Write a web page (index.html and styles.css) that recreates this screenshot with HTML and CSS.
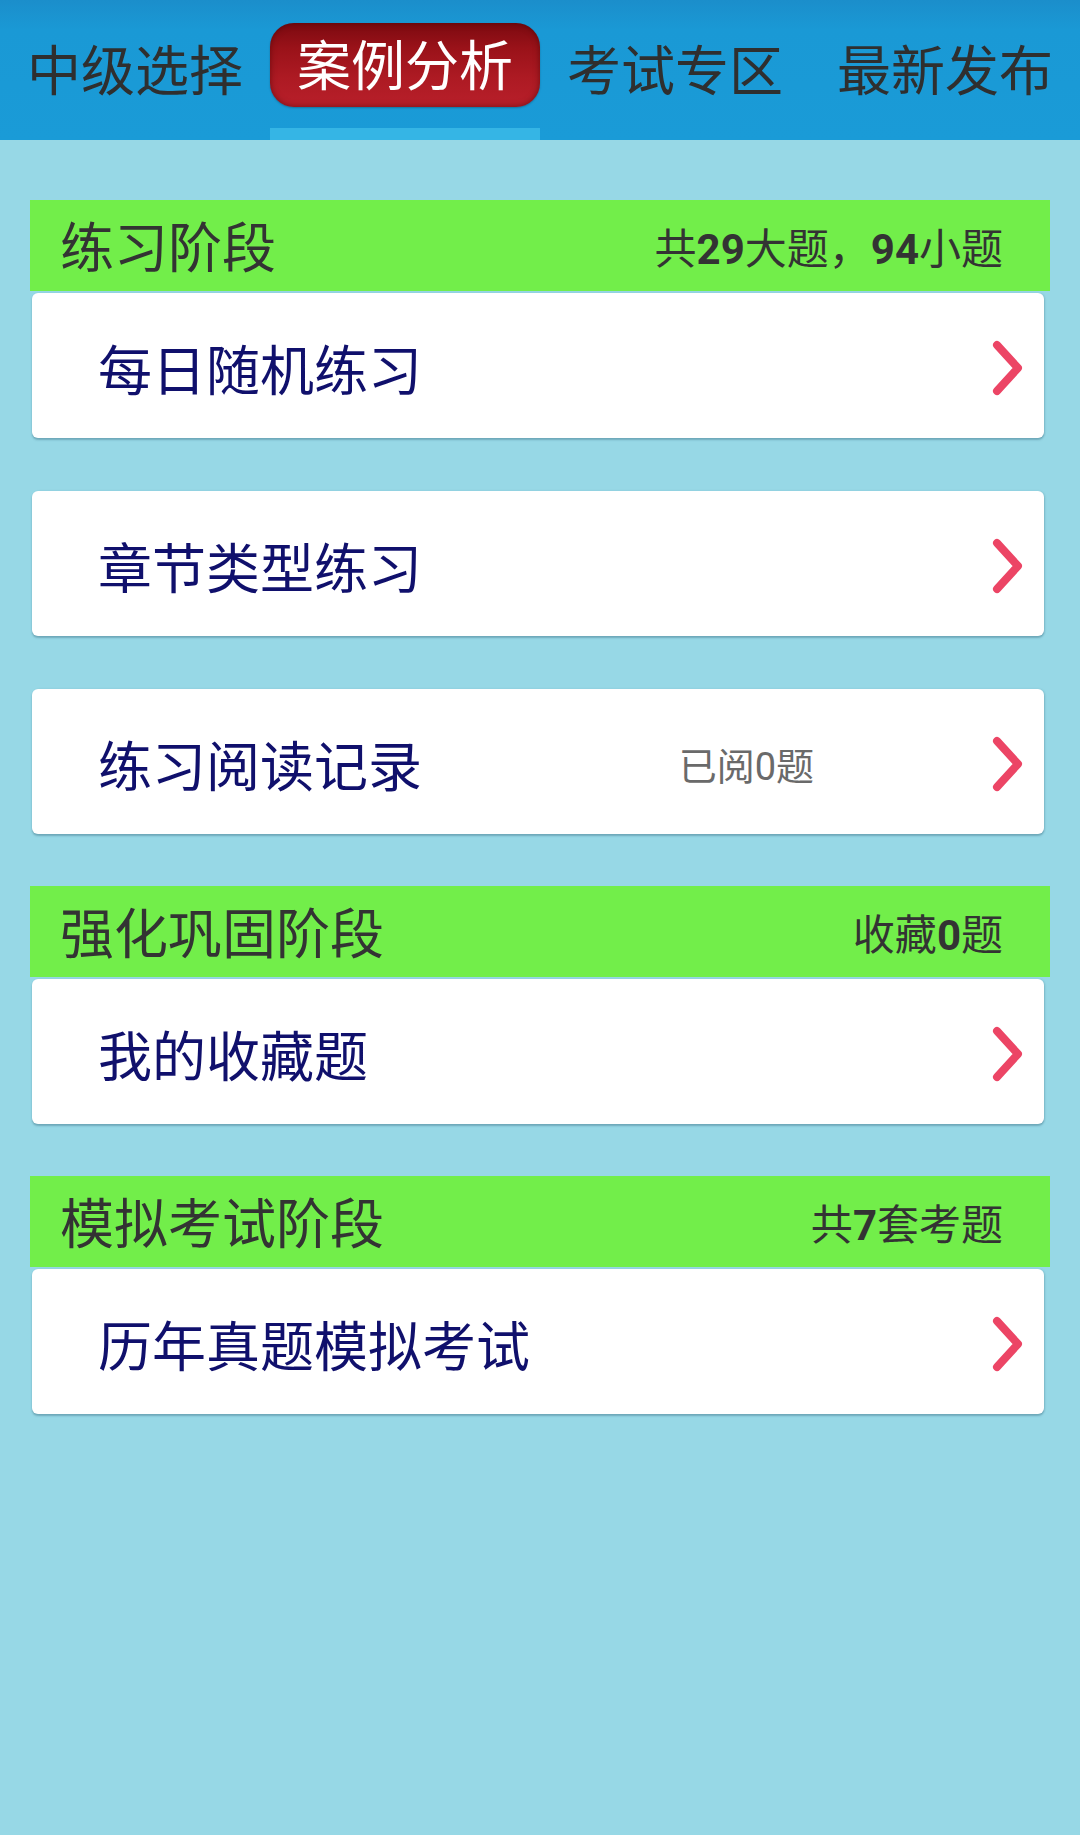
FILE: index.html
```html
<!DOCTYPE html>
<html lang="zh-CN">
<head>
<meta charset="utf-8">
<title>案例分析</title>
<link rel="stylesheet" href="styles.css">
</head>
<body>
<div class="app">
  <header class="tabs">
    <div class="tab"><span class="tab-text">中级选择</span></div>
    <div class="tab tab-active">
      <div class="pill">案例分析</div>
      <div class="underline"></div>
    </div>
    <div class="tab"><span class="tab-text">考试专区</span></div>
    <div class="tab"><span class="tab-text">最新发布</span></div>
  </header>

  <main class="content">
    <section class="section">
      <div class="band">
        <span class="band-title">练习阶段</span>
        <span class="band-info">共<b>29</b>大题，<b>94</b>小题</span>
      </div>
      <div class="card">
        <span class="card-label">每日随机练习</span>
        <svg class="chevron" viewBox="0 0 31 56" width="31" height="56"><path d="M5 5 L26 28 L5 51" /></svg>
      </div>
      <div class="card card-spaced">
        <span class="card-label">章节类型练习</span>
        <svg class="chevron" viewBox="0 0 31 56" width="31" height="56"><path d="M5 5 L26 28 L5 51" /></svg>
      </div>
      <div class="card card-spaced">
        <span class="card-label">练习阅读记录</span>
        <span class="card-note">已阅0题</span>
        <svg class="chevron" viewBox="0 0 31 56" width="31" height="56"><path d="M5 5 L26 28 L5 51" /></svg>
      </div>
    </section>

    <section class="section section-spaced">
      <div class="band">
        <span class="band-title">强化巩固阶段</span>
        <span class="band-info">收藏<b>0</b>题</span>
      </div>
      <div class="card">
        <span class="card-label">我的收藏题</span>
        <svg class="chevron" viewBox="0 0 31 56" width="31" height="56"><path d="M5 5 L26 28 L5 51" /></svg>
      </div>
    </section>

    <section class="section section-spaced">
      <div class="band">
        <span class="band-title">模拟考试阶段</span>
        <span class="band-info">共<b>7</b>套考题</span>
      </div>
      <div class="card">
        <span class="card-label">历年真题模拟考试</span>
        <svg class="chevron" viewBox="0 0 31 56" width="31" height="56"><path d="M5 5 L26 28 L5 51" /></svg>
      </div>
    </section>
  </main>
</div>
</body>
</html>
```

FILE: styles.css
```css
* {
  box-sizing: border-box;
}

html, body {
  margin: 0;
  padding: 0;
}

body {
  background: #97d8e6;
  font-family: "Roboto", "Noto Sans CJK SC", sans-serif;
  width: 1080px;
  min-height: 1835px;
}

.app {
  width: 1080px;
  min-height: 1835px;
  background: #97d8e6;
}

/* ---------- top tab bar ---------- */
.tabs {
  height: 140px;
  display: grid;
  grid-template-columns: repeat(4, 270px);
  background: linear-gradient(to bottom, #1b8ecb 0px, #1a99d5 30px, #1a9bd7 140px);
}

.tab {
  height: 140px;
  display: flex;
  align-items: center;
  justify-content: center;
}

.tab-text {
  font-size: 54px;
  line-height: 1;
  padding-top: 6px;
  color: #2f2f2f;
}

.tab-active {
  flex-direction: column;
  align-items: stretch;
  justify-content: flex-start;
}

.pill {
  margin-top: 23px;
  height: 84px;
  padding-top: 6px;
  border-radius: 24px;
  background: linear-gradient(to bottom, #7c0a10 0%, #9a1219 30%, #ad1a23 65%, #b81f2a 100%);
  box-shadow: inset 0 0 6px rgba(60, 0, 0, 0.55), 0 1px 2px rgba(0, 0, 0, 0.25);
  color: #ffffff;
  font-size: 54px;
  line-height: 78px;
  text-align: center;
}

.underline {
  margin-top: auto;
  height: 12px;
  background: #35b5e5;
}

/* ---------- content ---------- */
.content {
  padding: 60px 30px 0 30px;
}

.section-spaced {
  margin-top: 52px;
}

.band {
  height: 91px;
  background: #72ee4a;
  display: flex;
  align-items: center;
  justify-content: space-between;
  padding: 0 47px 0 30px;
}

.band-title {
  font-size: 54px;
  line-height: 1;
  padding-top: 8px;
  color: #333333;
}

.band-info {
  font-size: 42px;
  line-height: 1;
  padding-top: 8px;
  color: #333333;
}

.band-info b {
  font-weight: 700;
}

.card {
  margin: 2px 6px 0 2px;
  height: 145px;
  background: #ffffff;
  border-radius: 6px;
  box-shadow: 0 2px 2px rgba(40, 90, 110, 0.35), 1px 0 2px rgba(40, 90, 110, 0.15);
  display: flex;
  align-items: center;
  padding: 0 21px 0 66px;
}

.card-spaced {
  margin-top: 53px;
}

.card-label {
  flex: 1;
  font-size: 54px;
  line-height: 1;
  padding-top: 14px;
  color: #10106c;
}

.card-note {
  font-size: 38px;
  line-height: 1;
  padding-top: 10px;
  color: #6a6a6a;
  margin-right: 178px;
}

.chevron {
  display: block;
  flex: none;
  margin-top: 4px;
}

.chevron path {
  fill: none;
  stroke: #ec4565;
  stroke-width: 8;
  stroke-linecap: round;
  stroke-linejoin: round;
}
```
